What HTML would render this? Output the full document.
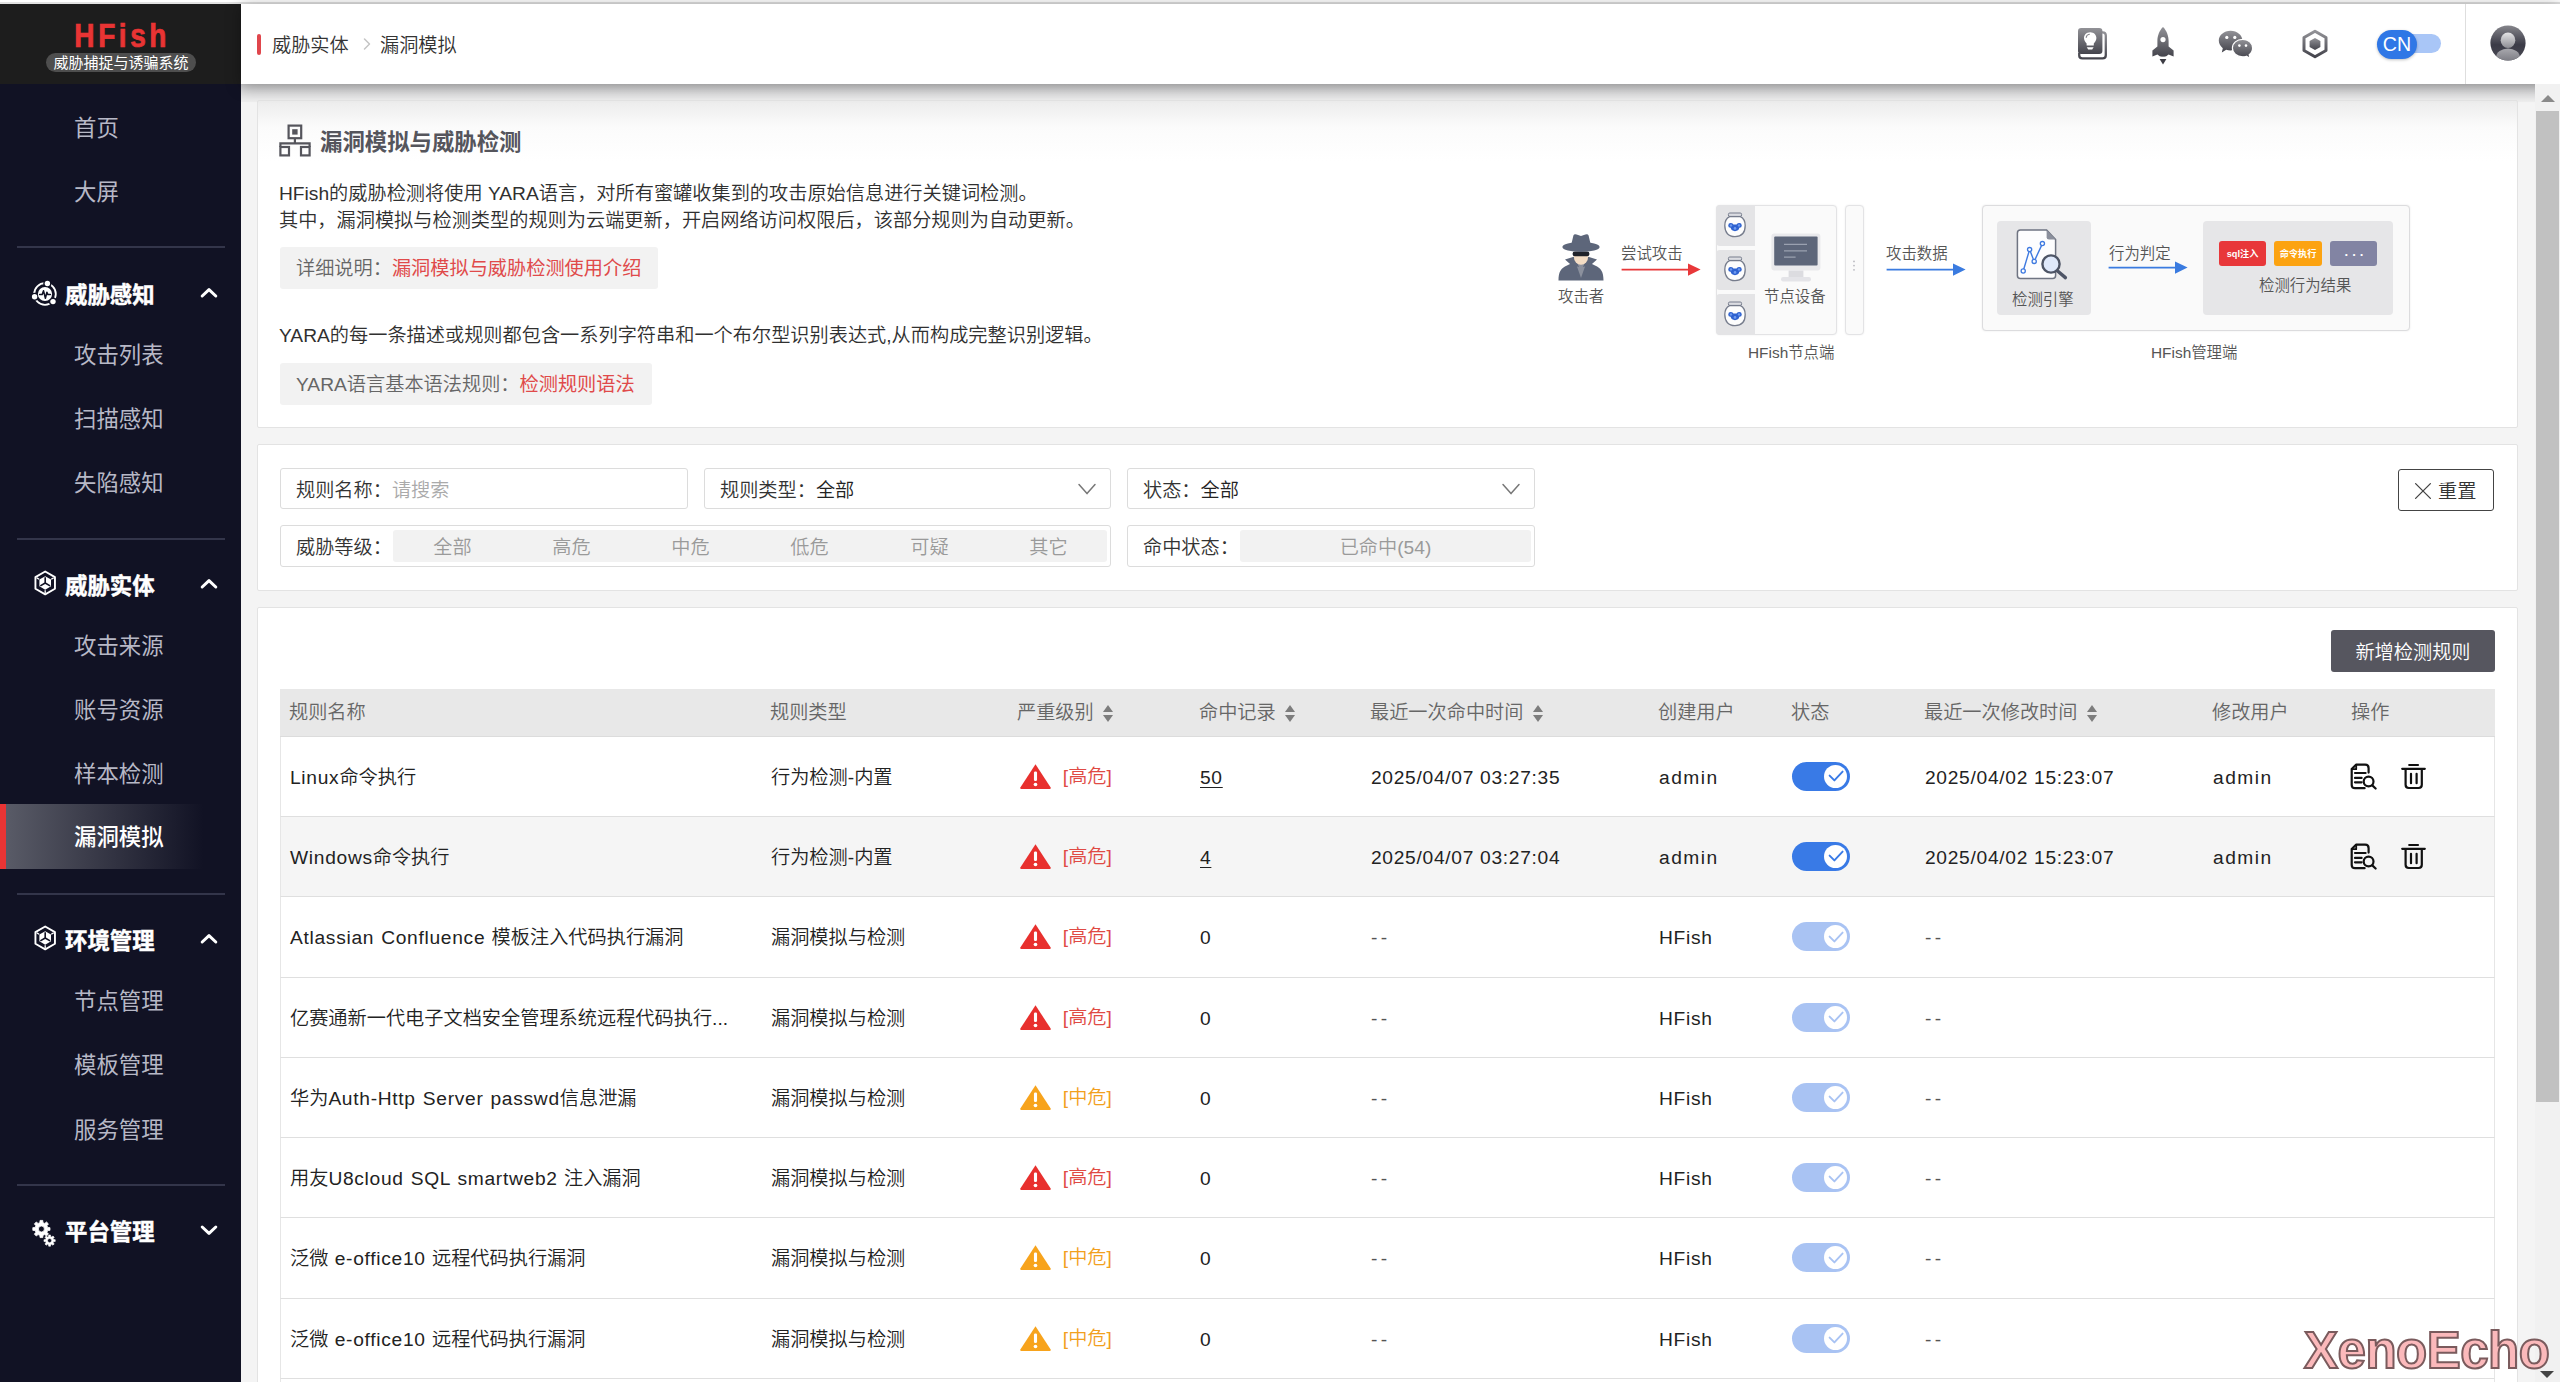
<!DOCTYPE html>
<html lang="zh-CN">
<head>
<meta charset="utf-8">
<title>HFish - 漏洞模拟</title>
<style>
*{box-sizing:border-box}
html,body{margin:0;padding:0}
body{width:2560px;height:1382px;overflow:hidden;position:relative;background:#f4f4f4;color:#222;
  font-family:"Liberation Sans","Noto Sans CJK SC",sans-serif;font-size:19.2px;font-weight:350}
svg{display:block}
.topline{position:absolute;left:0;top:0;width:2560px;height:4px;background:#fff;border-bottom:2px solid #e2e2e2}
/* ---------- sidebar ---------- */
.side{position:absolute;left:0;top:4px;width:241px;height:1378px;background:#111224;font-weight:400}
.logo{position:absolute;left:0;top:0;width:241px;height:80px;background:#1d1d1d}
.logo .brand{position:absolute;left:0;width:241px;top:14px;text-align:center;color:#e93434;font-weight:bold;font-size:33px;line-height:36px;letter-spacing:4.2px;text-indent:4px;transform:scaleX(.85);-webkit-text-stroke:.7px #e93434}
.logo .sub{position:absolute;left:46px;top:49px;width:150px;height:19px;border-radius:10px;background:#4e4e4e;color:#fff;font-size:15px;line-height:20px;text-align:center;white-space:nowrap}
.nav{position:absolute;left:0;width:241px;color:#b7b8c6;font-size:22.4px;line-height:65px;height:64px;padding-left:74px;white-space:nowrap}
.nav.on{color:#fff;font-weight:500;background:linear-gradient(90deg,#595b67 0%,#3c3d4b 34%,#111224 84%);border-left:6px solid #e93434;padding-left:68px;margin-top:-1px;height:65px;line-height:67px}
.sep{position:absolute;left:17px;width:208px;height:2px;background:#33354a}
.grp{position:absolute;left:0;width:241px;height:48px;color:#fff;font-weight:bold;font-size:22.4px;line-height:50px;padding-left:65px;white-space:nowrap;-webkit-text-stroke:.45px #fff}
.grp svg.gi{position:absolute}
.grp svg.chev{position:absolute;left:200px;top:16px}
/* ---------- header ---------- */
.hdr{position:absolute;left:241px;top:4px;width:2319px;height:80px;background:#fff;box-shadow:0 2px 14px rgba(0,0,0,.34);z-index:5}
.hdr .bar{position:absolute;left:16px;top:30px;width:4px;height:21px;background:#e0464c;border-radius:2px}
.hdr .bc{position:absolute;top:26px;height:32px;line-height:32px;font-size:19.2px;color:#333;white-space:nowrap}
.hdr .vline{position:absolute;left:2224px;top:0;width:1px;height:80px;background:#dedede}
.hdr .hi{position:absolute}
.lang{position:absolute;left:2135px;top:26px;width:66px;height:28px}
.lang .trk{position:absolute;left:22px;top:4.3px;width:43px;height:19px;border-radius:10px;background:#a9c6f7}
.lang .kn{position:absolute;left:1px;top:-.4px;width:40px;height:29px;border-radius:14.5px;background:#2f77e6;color:#fff;font-size:19.6px;line-height:29px;text-align:center;box-shadow:0 1px 3px rgba(0,0,0,.25)}
/* ---------- main ---------- */
.shade{position:absolute;left:241px;top:84px;width:2296px;height:18px;background:linear-gradient(#cfcfd1,#eeeeee);z-index:1}
.card{position:absolute;left:257px;width:2261px;background:#fff;border:1px solid #e3e3e3;border-radius:2px;z-index:2}
.card1{top:100px;height:328px;background:linear-gradient(#ececec 0,#fbfbfb 26px,#fff 60px)}
.card2{top:444px;height:147px}
.card3{top:607px;height:800px}
.c1title{position:absolute;left:62px;top:26px;font-size:22.4px;font-weight:bold;color:#55555c;line-height:32px;white-space:nowrap}
.c1ico{position:absolute;left:21px;top:23px}
.p{position:absolute;left:21px;white-space:nowrap;font-size:19.2px;line-height:26px;color:#303030}
.tip{position:absolute;left:22px;height:42px;background:#f2f2f2;border-radius:3px;padding:0 17px 0 16px;font-size:19.2px;line-height:44px;color:#666;white-space:nowrap}
.tip b{font-weight:normal;color:#e04a4a}
/* filter */
.fbox{position:absolute;height:41px;border:1px solid #dcdcdc;border-radius:3px;background:#fff;font-size:19.2px;line-height:43px;padding-left:15px;color:#333;white-space:nowrap}
.fbox .ph{color:#aaa}
.fbox .val{color:#222}
.fbox svg.dd{position:absolute;right:13px;top:14px}
.seg{position:absolute;top:4px;height:32px;background:#f2f2f2;border-radius:3px;color:#9a9a9a;font-size:19.2px;line-height:35px}
.seg span{position:absolute;top:0;text-align:center;width:119px}
.reset{position:absolute;left:2140px;top:24px;width:96px;height:42px;border:1px solid #444;border-radius:3px;font-size:19.2px;line-height:43px;color:#333;padding-left:39px;white-space:nowrap}
.reset svg{position:absolute;left:15px;top:12px}
/* table */
.btn-add{position:absolute;left:2073px;top:22px;width:164px;height:42px;border-radius:3px;background:#56565f;color:#fff;font-size:19.2px;line-height:45px;text-align:center;white-space:nowrap}
.thead{position:absolute;left:22px;top:81px;width:2215px;height:48px;background:#e8e8e8;border-bottom:1px solid #dcdcdc}
.th{position:absolute;top:0;height:47px;line-height:48px;color:#666;font-size:19.2px;white-space:nowrap}
.sorter{display:inline-block;position:relative;width:10px;height:20px;margin-left:9px;vertical-align:-4px}
.sorter i{position:absolute;left:0;width:0;height:0;border-left:5px solid transparent;border-right:5px solid transparent}
.sorter i.up{top:1.5px;border-bottom:7.5px solid #7d7d7d}
.sorter i.dn{top:11.5px;border-top:7.5px solid #7d7d7d}
.tr{position:absolute;left:22px;width:2215px;border-bottom:1px solid #dfdfdf;border-left:1px solid #e6e6e6;border-right:1px solid #e6e6e6}
.tr.hover{background:#f5f5f5}
.td{position:absolute;top:0;height:100%;display:flex;align-items:center;font-size:19.2px;line-height:28px;padding-top:2px;color:#222;white-space:nowrap}
.l{letter-spacing:.7px}
.l.w{letter-spacing:1.5px}
.c1{left:9px;word-spacing:1px}.c2{left:490px}.c3{left:737px}.c4{left:919px}.c5{left:1090px}.c6{left:1378px}.c7{left:1511px}.c8{left:1644px}.c9{left:1932px}.c10{left:2069px}
.td.dash{color:#555;letter-spacing:3.4px}
.td u{text-underline-offset:3px}
.sev{margin-left:11px;position:relative;top:-1px}
.warn{margin-top:-2.5px;margin-left:.8px}
.sw{position:relative;display:block;width:58px;height:29px;border-radius:14.5px;background:#397ae6;margin-top:-3px}
.sw .knob{position:absolute;right:3px;top:3px;width:23px;height:23px;border-radius:12px;background:#fff}
.sw .knob svg{position:absolute;left:1.5px;top:1.5px}
.sw.dis{background:#a9c3f3}
.ic-view{margin-left:0;margin-top:-3px}
.ic-del{margin-left:22px;margin-top:-3px}
/* scrollbar */
.sbar{position:absolute;left:2535px;top:84px;width:25px;height:1298px;background:#f1f1f1;z-index:6}
.sbar .thumb{position:absolute;left:1px;top:27px;width:23px;height:991px;background:#c1c1c1}
.sbar .au{position:absolute;left:6px;top:11px;width:0;height:0;border-left:7px solid transparent;border-right:7px solid transparent;border-bottom:7px solid #8a8a8a}
.sbar .ad{position:absolute;left:5px;bottom:4px;width:0;height:0;border-left:7px solid transparent;border-right:7px solid transparent;border-top:7px solid #444}
.wm{position:absolute;left:2304px;top:1321px;z-index:9;font-family:"Liberation Sans",sans-serif;font-weight:bold;font-size:51px;line-height:60px;color:#fbb9bb;-webkit-text-stroke:2px #7a5b5d;letter-spacing:-0.5px;white-space:nowrap}

</style>
</head>
<body>
<div class="topline"></div>
<aside class="side">
<div class="logo"><div class="brand">HFish</div><div class="sub">威胁捕捉与诱骗系统</div></div>
<div class="nav" style="top:92px">首页</div>
<div class="nav" style="top:156px">大屏</div>
<div class="sep" style="top:242px"></div>
<div class="grp" style="top:267px"><svg class="gi" style="left:31px;top:8.5px" viewBox="0 0 28 28" width="28" height="28"><circle cx="14" cy="14" r="10.8" fill="none" stroke="#fff" stroke-width="1.8"/><circle cx="16.4" cy="3.5" r="4.1" fill="#111224"/><circle cx="3.6" cy="16.8" r="4.1" fill="#111224"/><circle cx="22.0" cy="21.6" r="4.1" fill="#111224"/><circle cx="14" cy="14" r="7.1" fill="#fff"/><path d="M8.6 14.6 H11.2 L12.5 10.8 L14.4 18.2 L15.9 12.2 L16.9 14.6 H19.4" fill="none" stroke="#111224" stroke-width="1.5" stroke-linejoin="round" stroke-linecap="round"/><circle cx="16.4" cy="3.5" r="2.7" fill="#fff"/><circle cx="3.6" cy="16.8" r="2.7" fill="#fff"/><circle cx="22.0" cy="21.6" r="2.7" fill="#fff"/></svg>威胁感知<svg class="chev" viewBox="0 0 18 12" width="18" height="12" fill="none" stroke="#fff" stroke-width="3" stroke-linecap="round" stroke-linejoin="round"><path d="M2.2 9 L9 2.6 L15.8 9"/></svg></div>
<div class="nav" style="top:319px">攻击列表</div>
<div class="nav" style="top:383px">扫描感知</div>
<div class="nav" style="top:447px">失陷感知</div>
<div class="sep" style="top:534px"></div>
<div class="grp" style="top:558px"><svg class="gi" style="left:33px;top:8px" viewBox="0 0 26 28" width="24.4" height="26.3"><path d="M13 1.6 L23.4 7.6 V20 L13 26 L2.6 20 V7.6 Z" fill="none" stroke="#fff" stroke-width="2" stroke-linejoin="round"/><path d="M13 6.6 L19.2 10.1 V17.4 L13 21 L6.8 17.4 V10.1 Z" fill="#fff"/><path d="M13 7.6 V13.9 M13 13.9 L7.8 16.9 M13 13.9 L18.2 16.9" stroke="#111224" stroke-width="1.7" fill="none"/><path d="M4 8.4 L6.6 9.9 M22 8.4 L19.4 9.9 M13 24.4 V21.6" stroke="#fff" stroke-width="1.4"/></svg>威胁实体<svg class="chev" viewBox="0 0 18 12" width="18" height="12" fill="none" stroke="#fff" stroke-width="3" stroke-linecap="round" stroke-linejoin="round"><path d="M2.2 9 L9 2.6 L15.8 9"/></svg></div>
<div class="nav" style="top:610px">攻击来源</div>
<div class="nav" style="top:674px">账号资源</div>
<div class="nav" style="top:738px">样本检测</div>
<div class="nav on" style="top:801px">漏洞模拟</div>
<div class="sep" style="top:889px"></div>
<div class="grp" style="top:913px"><svg class="gi" style="left:33px;top:8px" viewBox="0 0 26 28" width="24.4" height="26.3"><path d="M13 1.6 L23.4 7.6 V20 L13 26 L2.6 20 V7.6 Z" fill="none" stroke="#fff" stroke-width="2" stroke-linejoin="round"/><path d="M13 6.6 L19.2 10.1 V17.4 L13 21 L6.8 17.4 V10.1 Z" fill="#fff"/><path d="M13 7.6 V13.9 M13 13.9 L7.8 16.9 M13 13.9 L18.2 16.9" stroke="#111224" stroke-width="1.7" fill="none"/><path d="M4 8.4 L6.6 9.9 M22 8.4 L19.4 9.9 M13 24.4 V21.6" stroke="#fff" stroke-width="1.4"/></svg>环境管理<svg class="chev" viewBox="0 0 18 12" width="18" height="12" fill="none" stroke="#fff" stroke-width="3" stroke-linecap="round" stroke-linejoin="round"><path d="M2.2 9 L9 2.6 L15.8 9"/></svg></div>
<div class="nav" style="top:965px">节点管理</div>
<div class="nav" style="top:1029px">模板管理</div>
<div class="nav" style="top:1094px">服务管理</div>
<div class="sep" style="top:1180px"></div>
<div class="grp" style="top:1204px"><svg class="gi" style="left:31px;top:11px" viewBox="0 0 26 28" width="26" height="28"><path fill="#fff" fill-rule="evenodd" stroke="#fff" stroke-width="0.8" stroke-linejoin="round" d="M18.99 8.64 L18.99 11.36 L16.71 11.58 L15.98 13.34 L17.44 15.11 L15.51 17.04 L13.74 15.58 L11.98 16.31 L11.76 18.59 L9.04 18.59 L8.82 16.31 L7.06 15.58 L5.29 17.04 L3.36 15.11 L4.82 13.34 L4.09 11.58 L1.81 11.36 L1.81 8.64 L4.09 8.42 L4.82 6.66 L3.36 4.89 L5.29 2.96 L7.06 4.42 L8.82 3.69 L9.04 1.41 L11.76 1.41 L11.98 3.69 L13.74 4.42 L15.51 2.96 L17.44 4.89 L15.98 6.66 L16.71 8.42 Z M7.40 10.00 a3.00 3.00 0 1 0 6.00 0 a3.00 3.00 0 1 0 -6.00 0 Z"/><path fill="#fff" fill-rule="evenodd" stroke="#fff" stroke-width="0.6" stroke-linejoin="round" d="M24.23 20.71 L24.23 22.49 L22.67 22.62 L22.20 23.76 L23.21 24.95 L21.95 26.21 L20.76 25.20 L19.62 25.67 L19.49 27.23 L17.71 27.23 L17.58 25.67 L16.44 25.20 L15.25 26.21 L13.99 24.95 L15.00 23.76 L14.53 22.62 L12.97 22.49 L12.97 20.71 L14.53 20.58 L15.00 19.44 L13.99 18.25 L15.25 16.99 L16.44 18.00 L17.58 17.53 L17.71 15.97 L19.49 15.97 L19.62 17.53 L20.76 18.00 L21.95 16.99 L23.21 18.25 L22.20 19.44 L22.67 20.58 Z M16.50 21.60 a2.10 2.10 0 1 0 4.20 0 a2.10 2.10 0 1 0 -4.20 0 Z"/></svg>平台管理<svg class="chev" viewBox="0 0 18 12" width="18" height="12" fill="none" stroke="#fff" stroke-width="3" stroke-linecap="round" stroke-linejoin="round"><path d="M2.2 3 L9 9.4 L15.8 3"/></svg></div>
</aside>
<header class="hdr">
<div class="bar"></div>
<div class="bc" style="left:31px">威胁实体</div>
<svg class="hi" style="left:121px;top:33px" viewBox="0 0 10 14" width="10" height="14" fill="none" stroke="#c4c4c4" stroke-width="1.5" stroke-linecap="round" stroke-linejoin="round"><path d="M2.5 2 L7.5 7 L2.5 12"/></svg>
<div class="bc" style="left:139px">漏洞模拟</div>
<svg width="0" height="0" style="position:absolute"><defs>
<linearGradient id="gg" x1="0" y1="0" x2="0" y2="1"><stop offset="0" stop-color="#929297"/><stop offset="1" stop-color="#44444c"/></linearGradient>
<linearGradient id="ga" x1="0" y1="0" x2="0" y2="1"><stop offset="0" stop-color="#86868c"/><stop offset="0.55" stop-color="#3b3b47"/><stop offset="1" stop-color="#4a4a54"/></linearGradient>
<linearGradient id="gh" x1="0" y1="0" x2="0" y2="1"><stop offset="0" stop-color="#e4e4e6"/><stop offset="1" stop-color="#8f8f95"/></linearGradient>
<linearGradient id="gb" x1="0" y1="0" x2="0" y2="1"><stop offset="0" stop-color="#a9a9ae"/><stop offset="1" stop-color="#6d6d75"/></linearGradient>
</defs></svg>
<svg class="hi" style="left:1836px;top:23px" viewBox="0 0 32 34" width="32" height="34">
<path d="M6 5.3 H25.6 Q28.8 5.3 28.8 8.5 V28.2 Q28.8 31.4 25.6 31.4 H5.4 Q2.2 31.4 2.2 28.2 V26" fill="none" stroke="url(#gg)" stroke-width="2.3"/>
<rect x="1" y="1" width="24.4" height="26" rx="3.2" fill="url(#gg)"/>
<path d="M13.2 5.2 C9.2 5.2 7 8 7 11 C7 13.6 8.6 15 9.6 16.6 V18.6 H16.8 V16.6 C17.8 15 19.4 13.6 19.4 11 C19.4 8 17.2 5.2 13.2 5.2 Z" fill="#fff"/>
<path d="M9.8 20.2 H16.6 L15.2 22.4 H11.2 Z" fill="#fff"/>
<path d="M9.2 10.4 Q9.6 7.6 12.4 7.2" fill="none" stroke="#85858b" stroke-width="1.1" stroke-linecap="round"/>
</svg>
<svg class="hi" style="left:1909px;top:22px" viewBox="0 0 26 40" width="26" height="40">
<path d="M13 1 C16.6 4.4 18.6 9.8 18.6 15 V20.4 L23.6 24.4 V30.6 L18.6 28.4 Q16 31 13 30.6 Q10 31 7.4 28.4 L2.4 30.6 V24.4 L7.4 20.4 V15 C7.4 9.8 9.4 4.4 13 1 Z" fill="url(#gg)"/>
<circle cx="13" cy="13.6" r="2.6" fill="#fff"/>
<path d="M9.6 33 H16.4 L13 38.4 Z" fill="#3d3d45"/>
</svg>
<svg class="hi" style="left:1976px;top:26px" viewBox="0 0 36 32" width="36" height="32">
<path d="M13.6 0.8 C20.2 0.8 25.4 5.2 25.4 10.6 C25.4 16 20.2 20.4 13.6 20.4 C12 20.4 10.6 20.2 9.2 19.8 L4.8 22.4 L5.8 18.2 C3.4 16.4 1.8 13.7 1.8 10.6 C1.8 5.2 7 0.8 13.6 0.8 Z" fill="url(#gg)"/>
<path d="M25.6 9.4 C31.4 9.4 35.6 13.2 35.6 18 C35.6 20.8 34.2 23.2 32.2 24.8 L33 28.2 L29.4 26.2 C28.2 26.6 26.9 26.8 25.6 26.8 C19.8 26.8 15.4 23 15.4 18 C15.4 13.2 19.8 9.4 25.6 9.4 Z" fill="url(#gg)" stroke="#fff" stroke-width="1.2"/>
<circle cx="9.8" cy="7.4" r="1.6" fill="#fff"/><circle cx="17.8" cy="7.4" r="1.6" fill="#fff"/>
<circle cx="22.4" cy="15.6" r="1.3" fill="#fff"/><circle cx="29" cy="15.6" r="1.3" fill="#fff"/>
</svg>
<svg class="hi" style="left:2060px;top:25px" viewBox="0 0 28 30" width="28" height="30">
<path d="M14 2.2 L25 8.5 V21.5 L14 27.8 L3 21.5 V8.5 Z" fill="none" stroke="url(#gg)" stroke-width="3" stroke-linejoin="round"/>
<path d="M14 9 L19.4 12 V18 L14 21 L8.6 18 V12 Z" fill="url(#gg)"/>
</svg>
<div class="lang"><div class="trk"></div><div class="kn">CN</div></div>
<div class="vline"></div>
<svg class="hi" style="left:2249px;top:21px" viewBox="0 0 36 36" width="36" height="36">
<defs><clipPath id="avc"><circle cx="18" cy="18" r="17.6"/></clipPath></defs>
<circle cx="18" cy="18" r="17.6" fill="url(#ga)"/>
<g clip-path="url(#avc)"><ellipse cx="18" cy="32" rx="11.8" ry="8.6" fill="url(#gb)"/></g>
<ellipse cx="18" cy="15.2" rx="7.3" ry="7.7" fill="url(#gh)"/>
</svg>
</header>
<div class="shade"></div>

<section class="card card1">
<svg class="c1ico" viewBox="0 0 32 33" width="32" height="33" fill="none" stroke="#55555c" stroke-width="2.2">
<rect x="9.6" y="1.6" width="12.6" height="12.6"/>
<rect x="13.2" y="5.2" width="5.4" height="5.4" fill="#55555c" stroke="none"/>
<path d="M15.9 14.2 V19.4 M1.4 23 V19.4 H30.6 V23"/>
<rect x="1.4" y="23" width="8.6" height="8.4"/>
<rect x="22" y="23" width="8.6" height="8.4"/>
</svg>
<div class="c1title">漏洞模拟与威胁检测</div>
<div class="p" style="top:80px">HFish的威胁检测将使用 YARA语言，对所有蜜罐收集到的攻击原始信息进行关键词检测。</div>
<div class="p" style="top:107px">其中，漏洞模拟与检测类型的规则为云端更新，开启网络访问权限后，该部分规则为自动更新。</div>
<div class="tip" style="top:146px">详细说明：<b>漏洞模拟与威胁检测使用介绍</b></div>
<div class="p" style="top:222px">YARA的每一条描述或规则都包含一系列字符串和一个布尔型识别表达式,从而构成完整识别逻辑。</div>
<div class="tip" style="top:262px">YARA语言基本语法规则：<b>检测规则语法</b></div>

<div class="dg" style="position:absolute;left:-258px;top:-101px;width:0;height:0;font-size:15.4px;color:#555;line-height:20px;white-space:nowrap">
<svg style="position:absolute;left:1556px;top:232px" viewBox="0 0 50 50" width="50" height="50">
<path d="M2.5 48.6 C2.5 40 5 36 11 33.6 L19 29.6 H31 L39 33.6 C45 36 47.5 40 47.5 48.6 Z" fill="#5d667a"/>
<path d="M19.4 30 L25 46 L30.6 30 Z" fill="#8b909d"/>
<path d="M9 27.6 L18.6 24.6 L23 35 L14.6 32.6 Z M41 27.6 L31.4 24.6 L27 35 L35.4 32.6 Z" fill="#5d667a"/>
<ellipse cx="25" cy="24.6" rx="7.2" ry="8.2" fill="#f3dcc4"/>
<rect x="16.6" y="19.6" width="16.8" height="4.6" rx="2.2" fill="#1f222a"/>
<ellipse cx="25" cy="15" rx="18.6" ry="5" fill="#5d667a"/>
<path d="M14.6 15.4 L17.4 3.6 Q18.2 1.6 20.6 2.6 L25 4 L29.4 2.6 Q31.8 1.6 32.6 3.6 L35.4 15.4 Z" fill="#5d667a"/>
</svg>
<div style="position:absolute;left:1558px;top:287px">攻击者</div>
<div style="position:absolute;left:1621px;top:244px">尝试攻击</div>
<svg style="position:absolute;left:1620px;top:262px" viewBox="0 0 82 16" width="82" height="16"><path d="M1.6 7.6 H70" stroke="#e8383a" stroke-width="1.7"/><path d="M68 1.4 L80.6 7.6 L68 13.8 Z" fill="#e8383a"/></svg>
<div style="position:absolute;left:1716px;top:205px;width:121px;height:130px;background:#fafafa;border:1px solid #e3e3e5;border-radius:4px;box-shadow:0 0 2px rgba(0,0,0,.08)"></div>
<div style="position:absolute;left:1716px;top:205px;width:39px;height:41px;background:#e4e4e6;border-radius:4px 0 0 4px"></div>
<div style="position:absolute;left:1716px;top:250px;width:39px;height:40px;background:#e4e4e6;border-radius:4px 0 0 4px"></div>
<div style="position:absolute;left:1716px;top:294px;width:39px;height:41px;background:#e4e4e6;border-radius:4px 0 0 4px"></div>
<svg width="0" height="0" style="position:absolute"><defs><g id="jar">
<rect x="4.4" y="1" width="13.2" height="3.4" rx="1.4" fill="#dcdde2" stroke="#767c8c" stroke-width="1"/>
<path d="M5.6 4.6 H16.4 C20 6.4 21.2 9.6 21.2 13.6 C21.2 20.6 17.6 24.6 11 24.6 C4.4 24.6 0.8 20.6 0.8 13.6 C0.8 9.6 2 6.4 5.6 4.6 Z" fill="#fdfdfd" stroke="#767c8c" stroke-width="1.3"/>
<path d="M4.2 13.4 Q4.4 10.8 7 11 Q9 11.2 9.4 12.6 H12.6 Q13 11.2 15 11 Q17.6 10.8 17.8 13.4 Q17.8 15.6 15.4 15.8 Q14.6 19 11 19.2 Q7.4 19 6.6 15.8 Q4.2 15.6 4.2 13.4 Z" fill="#2f62d0"/>
<circle cx="7" cy="13.4" r="1.2" fill="#6f9bf0"/><circle cx="15" cy="13.4" r="1.2" fill="#6f9bf0"/><circle cx="11" cy="16.4" r="1.3" fill="#6f9bf0"/>
</g></defs></svg>
<svg style="position:absolute;left:1724px;top:212px" viewBox="0 0 22 26" width="22" height="26"><use href="#jar"/></svg>
<svg style="position:absolute;left:1724px;top:256px" viewBox="0 0 22 26" width="22" height="26"><use href="#jar"/></svg>
<svg style="position:absolute;left:1724px;top:301px" viewBox="0 0 22 26" width="22" height="26"><use href="#jar"/></svg>
<svg style="position:absolute;left:1770px;top:232px" viewBox="0 0 52 52" width="52" height="52">
<rect x="1.4" y="1.6" width="49" height="37" rx="3" fill="#e9e9ec"/>
<rect x="4.2" y="4.6" width="43.4" height="29" rx="1" fill="#5d667a"/>
<path d="M14 12.4 H37 M14 18.8 H37 M14 25.2 H25.6" stroke="#9aa1b0" stroke-width="1.3"/>
<rect x="18.6" y="38.6" width="14.8" height="7" fill="#dcdce0"/>
<rect x="11" y="45" width="30" height="4.4" rx="2.2" fill="#e4e4e8"/>
</svg>
<div style="position:absolute;left:1764px;top:287px">节点设备</div>
<div style="position:absolute;left:1845px;top:205px;width:19px;height:130px;background:#fafafa;border:1px solid #e3e3e5;border-radius:4px;box-shadow:0 0 2px rgba(0,0,0,.08)"></div>
<svg style="position:absolute;left:1850px;top:258px" viewBox="0 0 8 16" width="8" height="16" fill="#b9b9c0"><circle cx="4" cy="3.4" r="0.9"/><circle cx="4" cy="7.6" r="0.9"/><circle cx="4" cy="11.8" r="0.9"/></svg>
<div style="position:absolute;left:1748px;top:343px">HFish节点端</div>
<div style="position:absolute;left:1886px;top:244px">攻击数据</div>
<svg style="position:absolute;left:1885px;top:262px" viewBox="0 0 82 16" width="82" height="16"><path d="M1.6 7.6 H70" stroke="#3a7be0" stroke-width="1.7"/><path d="M68 1.4 L80.6 7.6 L68 13.8 Z" fill="#3a7be0"/></svg>
<div style="position:absolute;left:1982px;top:205px;width:428px;height:126px;background:#fafafa;border:1px solid #dcdcde;border-radius:4px;box-shadow:0 0 2px rgba(0,0,0,.1)"></div>
<div style="position:absolute;left:1997px;top:221px;width:94px;height:94px;background:#e6e6e8;border-radius:4px"></div>
<svg style="position:absolute;left:2015px;top:228px" viewBox="0 0 54 54" width="54" height="54">
<path d="M5.4 2 H31.6 L40.6 11.6 V47.6 Q40.6 50.6 37.6 50.6 H5.4 Q2.4 50.6 2.4 47.6 V5 Q2.4 2 5.4 2 Z" fill="#fdfdfe" stroke="#6f7482" stroke-width="1.5"/>
<path d="M31.6 2 L40.6 11.6 H34 Q31.6 11.6 31.6 9.2 Z" fill="#8b8f9c"/>
<path d="M8.2 43 L14.6 21.6 L19.2 33.4 L27.4 15.6" fill="none" stroke="#3f7ae0" stroke-width="1.4" stroke-linejoin="round"/>
<g fill="#fff" stroke="#3f7ae0" stroke-width="1.3"><circle cx="8.2" cy="43" r="2.1"/><circle cx="14.6" cy="21.6" r="2.1"/><circle cx="19.2" cy="33.4" r="2.1"/><circle cx="27.4" cy="15.6" r="2.1"/></g>
<circle cx="36" cy="36" r="8.6" fill="#dfe9fb" stroke="#4e5566" stroke-width="2.4"/>
<path d="M42.6 43 L50.4 49.6" stroke="#4e5566" stroke-width="3.4" stroke-linecap="round"/>
</svg>
<div style="position:absolute;left:2012px;top:290px">检测引擎</div>
<div style="position:absolute;left:2109px;top:244px">行为判定</div>
<svg style="position:absolute;left:2107px;top:260px" viewBox="0 0 82 16" width="82" height="16"><path d="M1.6 7.6 H70" stroke="#3a7be0" stroke-width="1.7"/><path d="M68 1.4 L80.6 7.6 L68 13.8 Z" fill="#3a7be0"/></svg>
<div style="position:absolute;left:2203px;top:221px;width:190px;height:94px;background:#e6e6e8;border-radius:4px"></div>
<div style="position:absolute;left:2219px;top:241px;width:47px;height:25px;border-radius:3px;background:#e8373a;color:#fff;font-weight:bold;font-size:9.2px;line-height:26px;text-align:center">sql注入</div>
<div style="position:absolute;left:2274px;top:241px;width:48px;height:25px;border-radius:3px;background:#fca311;color:#fff;font-weight:bold;font-size:9.2px;line-height:26px;text-align:center">命令执行</div>
<div style="position:absolute;left:2330px;top:241px;width:47px;height:25px;border-radius:3px;background:#8284a3;color:#fff;font-weight:bold;font-size:13px;line-height:27px;text-align:center;letter-spacing:3.4px;text-indent:5px">···</div>
<div style="position:absolute;left:2259px;top:276px">检测行为结果</div>
<div style="position:absolute;left:2151px;top:343px">HFish管理端</div>
</div>
</section>

<section class="card card2">
<div class="fbox" style="left:22px;top:23px;width:408px">规则名称：<span class="ph">请搜索</span></div>
<div class="fbox" style="left:446px;top:23px;width:407px">规则类型：<span class="val">全部</span><svg class="dd" viewBox="0 0 20 12" width="20" height="12" fill="none" stroke="#777" stroke-width="1.5" stroke-linecap="round" stroke-linejoin="round"><path d="M2 1.6 L10 10.6 L18 1.6"/></svg></div>
<div class="fbox" style="left:869px;top:23px;width:408px">状态：<span class="val">全部</span><svg class="dd" viewBox="0 0 20 12" width="20" height="12" fill="none" stroke="#777" stroke-width="1.5" stroke-linecap="round" stroke-linejoin="round"><path d="M2 1.6 L10 10.6 L18 1.6"/></svg></div>
<div class="fbox" style="left:22px;top:80px;width:831px;height:42px">威胁等级：<div class="seg" style="left:112px;width:714px"><span style="left:0">全部</span><span style="left:119px">高危</span><span style="left:238px">中危</span><span style="left:357px">低危</span><span style="left:477px">可疑</span><span style="left:596px">其它</span></div></div>
<div class="fbox" style="left:869px;top:80px;width:408px;height:42px">命中状态：<div class="seg" style="left:112px;width:291px"><span style="left:0;width:291px">已命中(54)</span></div></div>
<div class="reset"><svg viewBox="0 0 18 18" width="18" height="18" fill="none" stroke="#444" stroke-width="1.3" stroke-linecap="round"><path d="M1.6 1.6 L16.4 16.4 M16.4 1.6 L1.6 16.4"/></svg>重置</div>
</section>

<section class="card card3">
<div class="btn-add">新增检测规则</div>
<div class="thead">
<div class="th" style="left:9px">规则名称</div>
<div class="th" style="left:490px">规则类型</div>
<div class="th" style="left:737px">严重级别<span class="sorter"><i class="up"></i><i class="dn"></i></span></div>
<div class="th" style="left:919px">命中记录<span class="sorter"><i class="up"></i><i class="dn"></i></span></div>
<div class="th" style="left:1090px">最近一次命中时间<span class="sorter"><i class="up"></i><i class="dn"></i></span></div>
<div class="th" style="left:1378px">创建用户</div>
<div class="th" style="left:1511px">状态</div>
<div class="th" style="left:1644px">最近一次修改时间<span class="sorter"><i class="up"></i><i class="dn"></i></span></div>
<div class="th" style="left:1932px">修改用户</div>
<div class="th" style="left:2071px">操作</div>
</div>
<div class="tr" style="top:129px;height:80px">
<div class="td c1"><span><span class="l">Linux</span>命令执行</span></div>
<div class="td c2">行为检测-内置</div>
<div class="td c3"><svg class="warn" viewBox="0 0 34 30" width="33" height="27" preserveAspectRatio="none"><path d="M17 1.5 L32.6 27.2 Q33.4 28.8 31.6 28.8 L2.4 28.8 Q0.6 28.8 1.4 27.2 Z" fill="#e8302e"/><rect x="15.4" y="9.5" width="3.2" height="10.5" rx="1.4" fill="#fff"/><circle cx="17" cy="23.8" r="1.9" fill="#fff"/></svg><span class="sev" style="color:#e04a44">[高危]</span></div>
<div class="td c4"><u class="l">50</u></div>
<div class="td c5"><span><span class="l">2025/04/07 03:27:35</span></span></div>
<div class="td c6"><span class="l w">admin</span></div>
<div class="td c7"><span class="sw"><span class="knob"><svg viewBox="0 0 20 20" width="20" height="20"><path d="M3.6 9.6 L8.4 14.4 L16.6 5.6" fill="none" stroke="#397ae6" stroke-width="1.9" stroke-linecap="round" stroke-linejoin="round"/></svg></span></span></div>
<div class="td c8"><span><span class="l">2025/04/02 15:23:07</span></span></div>
<div class="td c9"><span class="l w">admin</span></div>
<div class="td c10"><svg class="ic-view" viewBox="0 0 28 28" width="28" height="28" fill="none" stroke="#111" stroke-width="2.2" stroke-linecap="round" stroke-linejoin="round"><path d="M14.6 26.2 H5 Q1.7 26.2 1.7 22.9 V7 L6 2.7 H15.2 Q18.6 2.7 18.6 6.2 V10.6"/><path d="M6.2 3 V7.2 H2" stroke-width="1.8"/><path d="M5 11 H15.6 M5 15.9 H11.6 M5 20.3 H11.6"/><circle cx="18.6" cy="19.5" r="4.9"/><path d="M22.3 23.4 L25.6 26.5"/></svg><svg class="ic-del" viewBox="0 0 28 28" width="28" height="28" fill="none" stroke="#111" stroke-width="2.2" stroke-linecap="round" stroke-linejoin="round"><path d="M9.2 3 H18"/><path d="M2.2 6.8 H24.8"/><path d="M5.6 7 V22.8 Q5.6 26 8.8 26 H18.6 Q21.8 26 21.8 22.8 V7"/><path d="M11 11.8 V21.2 M16.6 11.8 V21.2"/></svg></div>
</div>
<div class="tr hover" style="top:209px;height:80px">
<div class="td c1"><span><span class="l">Windows</span>命令执行</span></div>
<div class="td c2">行为检测-内置</div>
<div class="td c3"><svg class="warn" viewBox="0 0 34 30" width="33" height="27" preserveAspectRatio="none"><path d="M17 1.5 L32.6 27.2 Q33.4 28.8 31.6 28.8 L2.4 28.8 Q0.6 28.8 1.4 27.2 Z" fill="#e8302e"/><rect x="15.4" y="9.5" width="3.2" height="10.5" rx="1.4" fill="#fff"/><circle cx="17" cy="23.8" r="1.9" fill="#fff"/></svg><span class="sev" style="color:#e04a44">[高危]</span></div>
<div class="td c4"><u class="l">4</u></div>
<div class="td c5"><span><span class="l">2025/04/07 03:27:04</span></span></div>
<div class="td c6"><span class="l w">admin</span></div>
<div class="td c7"><span class="sw"><span class="knob"><svg viewBox="0 0 20 20" width="20" height="20"><path d="M3.6 9.6 L8.4 14.4 L16.6 5.6" fill="none" stroke="#397ae6" stroke-width="1.9" stroke-linecap="round" stroke-linejoin="round"/></svg></span></span></div>
<div class="td c8"><span><span class="l">2025/04/02 15:23:07</span></span></div>
<div class="td c9"><span class="l w">admin</span></div>
<div class="td c10"><svg class="ic-view" viewBox="0 0 28 28" width="28" height="28" fill="none" stroke="#111" stroke-width="2.2" stroke-linecap="round" stroke-linejoin="round"><path d="M14.6 26.2 H5 Q1.7 26.2 1.7 22.9 V7 L6 2.7 H15.2 Q18.6 2.7 18.6 6.2 V10.6"/><path d="M6.2 3 V7.2 H2" stroke-width="1.8"/><path d="M5 11 H15.6 M5 15.9 H11.6 M5 20.3 H11.6"/><circle cx="18.6" cy="19.5" r="4.9"/><path d="M22.3 23.4 L25.6 26.5"/></svg><svg class="ic-del" viewBox="0 0 28 28" width="28" height="28" fill="none" stroke="#111" stroke-width="2.2" stroke-linecap="round" stroke-linejoin="round"><path d="M9.2 3 H18"/><path d="M2.2 6.8 H24.8"/><path d="M5.6 7 V22.8 Q5.6 26 8.8 26 H18.6 Q21.8 26 21.8 22.8 V7"/><path d="M11 11.8 V21.2 M16.6 11.8 V21.2"/></svg></div>
</div>
<div class="tr" style="top:289px;height:81px">
<div class="td c1"><span><span class="l">Atlassian Confluence</span> 模板注入代码执行漏洞</span></div>
<div class="td c2">漏洞模拟与检测</div>
<div class="td c3"><svg class="warn" viewBox="0 0 34 30" width="33" height="27" preserveAspectRatio="none"><path d="M17 1.5 L32.6 27.2 Q33.4 28.8 31.6 28.8 L2.4 28.8 Q0.6 28.8 1.4 27.2 Z" fill="#e8302e"/><rect x="15.4" y="9.5" width="3.2" height="10.5" rx="1.4" fill="#fff"/><circle cx="17" cy="23.8" r="1.9" fill="#fff"/></svg><span class="sev" style="color:#e04a44">[高危]</span></div>
<div class="td c4">0</div>
<div class="td c5 dash"><span>--</span></div>
<div class="td c6"><span class="l">HFish</span></div>
<div class="td c7"><span class="sw dis"><span class="knob"><svg viewBox="0 0 20 20" width="20" height="20"><path d="M3.6 9.6 L8.4 14.4 L16.6 5.6" fill="none" stroke="#a9c3f3" stroke-width="1.9" stroke-linecap="round" stroke-linejoin="round"/></svg></span></span></div>
<div class="td c8 dash"><span>--</span></div>
</div>
<div class="tr" style="top:370px;height:80px">
<div class="td c1"><span>亿赛通新一代电子文档安全管理系统远程代码执行...</span></div>
<div class="td c2">漏洞模拟与检测</div>
<div class="td c3"><svg class="warn" viewBox="0 0 34 30" width="33" height="27" preserveAspectRatio="none"><path d="M17 1.5 L32.6 27.2 Q33.4 28.8 31.6 28.8 L2.4 28.8 Q0.6 28.8 1.4 27.2 Z" fill="#e8302e"/><rect x="15.4" y="9.5" width="3.2" height="10.5" rx="1.4" fill="#fff"/><circle cx="17" cy="23.8" r="1.9" fill="#fff"/></svg><span class="sev" style="color:#e04a44">[高危]</span></div>
<div class="td c4">0</div>
<div class="td c5 dash"><span>--</span></div>
<div class="td c6"><span class="l">HFish</span></div>
<div class="td c7"><span class="sw dis"><span class="knob"><svg viewBox="0 0 20 20" width="20" height="20"><path d="M3.6 9.6 L8.4 14.4 L16.6 5.6" fill="none" stroke="#a9c3f3" stroke-width="1.9" stroke-linecap="round" stroke-linejoin="round"/></svg></span></span></div>
<div class="td c8 dash"><span>--</span></div>
</div>
<div class="tr" style="top:450px;height:80px">
<div class="td c1"><span>华为<span class="l">Auth-Http Server passwd</span>信息泄漏</span></div>
<div class="td c2">漏洞模拟与检测</div>
<div class="td c3"><svg class="warn" viewBox="0 0 34 30" width="33" height="27" preserveAspectRatio="none"><path d="M17 1.5 L32.6 27.2 Q33.4 28.8 31.6 28.8 L2.4 28.8 Q0.6 28.8 1.4 27.2 Z" fill="#f7a31c"/><rect x="15.4" y="9.5" width="3.2" height="10.5" rx="1.4" fill="#fff"/><circle cx="17" cy="23.8" r="1.9" fill="#fff"/></svg><span class="sev" style="color:#f2a01e">[中危]</span></div>
<div class="td c4">0</div>
<div class="td c5 dash"><span>--</span></div>
<div class="td c6"><span class="l">HFish</span></div>
<div class="td c7"><span class="sw dis"><span class="knob"><svg viewBox="0 0 20 20" width="20" height="20"><path d="M3.6 9.6 L8.4 14.4 L16.6 5.6" fill="none" stroke="#a9c3f3" stroke-width="1.9" stroke-linecap="round" stroke-linejoin="round"/></svg></span></span></div>
<div class="td c8 dash"><span>--</span></div>
</div>
<div class="tr" style="top:530px;height:80px">
<div class="td c1"><span>用友<span class="l">U8cloud SQL smartweb2</span> 注入漏洞</span></div>
<div class="td c2">漏洞模拟与检测</div>
<div class="td c3"><svg class="warn" viewBox="0 0 34 30" width="33" height="27" preserveAspectRatio="none"><path d="M17 1.5 L32.6 27.2 Q33.4 28.8 31.6 28.8 L2.4 28.8 Q0.6 28.8 1.4 27.2 Z" fill="#e8302e"/><rect x="15.4" y="9.5" width="3.2" height="10.5" rx="1.4" fill="#fff"/><circle cx="17" cy="23.8" r="1.9" fill="#fff"/></svg><span class="sev" style="color:#e04a44">[高危]</span></div>
<div class="td c4">0</div>
<div class="td c5 dash"><span>--</span></div>
<div class="td c6"><span class="l">HFish</span></div>
<div class="td c7"><span class="sw dis"><span class="knob"><svg viewBox="0 0 20 20" width="20" height="20"><path d="M3.6 9.6 L8.4 14.4 L16.6 5.6" fill="none" stroke="#a9c3f3" stroke-width="1.9" stroke-linecap="round" stroke-linejoin="round"/></svg></span></span></div>
<div class="td c8 dash"><span>--</span></div>
</div>
<div class="tr" style="top:610px;height:81px">
<div class="td c1"><span>泛微 <span class="l">e-office10</span> 远程代码执行漏洞</span></div>
<div class="td c2">漏洞模拟与检测</div>
<div class="td c3"><svg class="warn" viewBox="0 0 34 30" width="33" height="27" preserveAspectRatio="none"><path d="M17 1.5 L32.6 27.2 Q33.4 28.8 31.6 28.8 L2.4 28.8 Q0.6 28.8 1.4 27.2 Z" fill="#f7a31c"/><rect x="15.4" y="9.5" width="3.2" height="10.5" rx="1.4" fill="#fff"/><circle cx="17" cy="23.8" r="1.9" fill="#fff"/></svg><span class="sev" style="color:#f2a01e">[中危]</span></div>
<div class="td c4">0</div>
<div class="td c5 dash"><span>--</span></div>
<div class="td c6"><span class="l">HFish</span></div>
<div class="td c7"><span class="sw dis"><span class="knob"><svg viewBox="0 0 20 20" width="20" height="20"><path d="M3.6 9.6 L8.4 14.4 L16.6 5.6" fill="none" stroke="#a9c3f3" stroke-width="1.9" stroke-linecap="round" stroke-linejoin="round"/></svg></span></span></div>
<div class="td c8 dash"><span>--</span></div>
</div>
<div class="tr" style="top:691px;height:80px">
<div class="td c1"><span>泛微 <span class="l">e-office10</span> 远程代码执行漏洞</span></div>
<div class="td c2">漏洞模拟与检测</div>
<div class="td c3"><svg class="warn" viewBox="0 0 34 30" width="33" height="27" preserveAspectRatio="none"><path d="M17 1.5 L32.6 27.2 Q33.4 28.8 31.6 28.8 L2.4 28.8 Q0.6 28.8 1.4 27.2 Z" fill="#f7a31c"/><rect x="15.4" y="9.5" width="3.2" height="10.5" rx="1.4" fill="#fff"/><circle cx="17" cy="23.8" r="1.9" fill="#fff"/></svg><span class="sev" style="color:#f2a01e">[中危]</span></div>
<div class="td c4">0</div>
<div class="td c5 dash"><span>--</span></div>
<div class="td c6"><span class="l">HFish</span></div>
<div class="td c7"><span class="sw dis"><span class="knob"><svg viewBox="0 0 20 20" width="20" height="20"><path d="M3.6 9.6 L8.4 14.4 L16.6 5.6" fill="none" stroke="#a9c3f3" stroke-width="1.9" stroke-linecap="round" stroke-linejoin="round"/></svg></span></span></div>
<div class="td c8 dash"><span>--</span></div>
</div>
<div class="tr" style="top:771px;height:80px"></div>
</section>
<div class="sbar"><div class="au"></div><div class="thumb"></div><div class="ad"></div></div>
<div class="wm">XenoEcho</div>

</body>
</html>
